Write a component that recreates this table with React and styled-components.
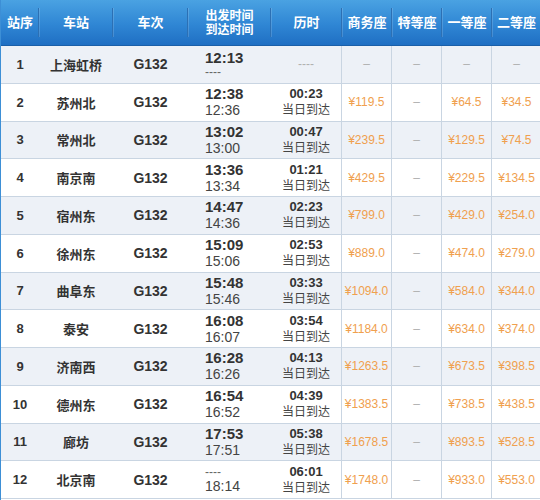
import React from 'react'
import styled, { createGlobalStyle } from 'styled-components'

const GlobalStyle = createGlobalStyle`
  html, body {
    margin: 0;
    padding: 0;
    background: #ffffff;
  }
  body {
    font-family: "Liberation Sans", "Noto Sans CJK SC", sans-serif;
    color: #333333;
  }
`

const COLS = '38px 74px 75px 83px 71px 50px 50px 50px 49px'

const Table = styled.div`
  width: 540px;
  height: 500px;
  overflow: hidden;
  border-left: 1px solid #3d8fd6;
  box-sizing: border-box;
`

const HeadRow = styled.div`
  display: grid;
  grid-template-columns: ${COLS};
  height: 46px;
  background: linear-gradient(#4aa2e2 0%, #2f86d4 55%, #1f6fc3 100%);
  border-bottom: 1px solid #1a5fa8;
  box-sizing: border-box;
`

const HeadCell = styled.div`
  display: flex;
  flex-direction: column;
  align-items: center;
  justify-content: center;
  text-align: center;
  color: #ffffff;
  font-family: "Liberation Sans", "Noto Sans CJK SC", sans-serif;
  font-weight: bold;
  font-size: 13px;
  line-height: 14px;
  position: relative;
  &:not(:last-child)::after {
    content: '';
    position: absolute;
    right: 0;
    top: 8px;
    bottom: 8px;
    width: 1px;
    background: #2c70b4;
    box-shadow: 1px 0 0 rgba(255, 255, 255, 0.15);
  }
`

const HeadLine = styled.span`
  font-size: 12px;
  line-height: 14px;
  height: 14px;
`

const Row = styled.div`
  display: grid;
  grid-template-columns: ${COLS};
  height: 37.75px;
  box-sizing: border-box;
  border-bottom: 1px solid #c9d5e2;
  background: ${(p) => (p.$alt ? '#edf1f7' : '#ffffff')};
`

const Cell = styled.div`
  display: flex;
  align-items: center;
  justify-content: center;
  text-align: center;
  box-sizing: border-box;
  border-right: ${(p) => (p.$line ? '1px solid #c9d5e2' : 'none')};
`

const Seq = styled(Cell)`
  font-size: 13px;
  font-weight: bold;
  color: #333;
`

const Station = styled(Cell)`
  font-family: "Noto Sans CJK SC", sans-serif;
  font-size: 13px;
  font-weight: bold;
  color: #333;
`

const Train = styled(Cell)`
  font-size: 14px;
  font-weight: bold;
  color: #333;
`

const TimeCell = styled.div`
  display: flex;
  flex-direction: column;
  justify-content: center;
  padding-left: 17px;
  line-height: 16px;
`

const Dep = styled.span`
  font-size: 15px;
  font-weight: bold;
  color: #333;
`

const Arr = styled.span`
  font-size: 14px;
  color: #444;
`

const Dash = styled.span`
  font-size: 12px;
  color: #666;
  line-height: 12px;
`

const Duration = styled(Cell)`
  flex-direction: column;
  line-height: 16px;
`

const DurTime = styled.span`
  font-size: 13px;
  font-weight: bold;
  color: #333;
`

const Same = styled.span`
  font-size: 12px;
  color: #444;
`

const Price = styled(Cell)`
  font-size: 12px;
  color: ${(p) => (p.$empty ? '#b0b0b0' : '#f0a04e')};
`

const stops = [
  ['1', '上海虹桥', '12:13', '----', '----', '', '–', '–', '–', '–'],
  ['2', '苏州北', '12:38', '12:36', '00:23', '当日到达', '¥119.5', '–', '¥64.5', '¥34.5'],
  ['3', '常州北', '13:02', '13:00', '00:47', '当日到达', '¥239.5', '–', '¥129.5', '¥74.5'],
  ['4', '南京南', '13:36', '13:34', '01:21', '当日到达', '¥429.5', '–', '¥229.5', '¥134.5'],
  ['5', '宿州东', '14:47', '14:36', '02:23', '当日到达', '¥799.0', '–', '¥429.0', '¥254.0'],
  ['6', '徐州东', '15:09', '15:06', '02:53', '当日到达', '¥889.0', '–', '¥474.0', '¥279.0'],
  ['7', '曲阜东', '15:48', '15:46', '03:33', '当日到达', '¥1094.0', '–', '¥584.0', '¥344.0'],
  ['8', '泰安', '16:08', '16:07', '03:54', '当日到达', '¥1184.0', '–', '¥634.0', '¥374.0'],
  ['9', '济南西', '16:28', '16:26', '04:13', '当日到达', '¥1263.5', '–', '¥673.5', '¥398.5'],
  ['10', '德州东', '16:54', '16:52', '04:39', '当日到达', '¥1383.5', '–', '¥738.5', '¥438.5'],
  ['11', '廊坊', '17:53', '17:51', '05:38', '当日到达', '¥1678.5', '–', '¥893.5', '¥528.5'],
  ['12', '北京南', '----', '18:14', '06:01', '当日到达', '¥1748.0', '–', '¥933.0', '¥553.0'],
]

const heads = ['站序', '车站', '车次', null, '历时', '商务座', '特等座', '一等座', '二等座']

export default function App() {
  return (
    <>
      <GlobalStyle />
      <Table>
        <HeadRow>
          {heads.map((h, i) =>
            h ? (
              <HeadCell key={i}>{h}</HeadCell>
            ) : (
              <HeadCell key={i}>
                <HeadLine>出发时间</HeadLine>
                <HeadLine>到达时间</HeadLine>
              </HeadCell>
            )
          )}
        </HeadRow>
        {stops.map((s, i) => (
          <Row key={s[0]} $alt={i % 2 === 0}>
            <Seq>{s[0]}</Seq>
            <Station>{s[1]}</Station>
            <Train>G132</Train>
            <TimeCell>
              {s[2] === '----' ? <Dash>----</Dash> : <Dep>{s[2]}</Dep>}
              {s[3] === '----' ? <Dash>----</Dash> : <Arr>{s[3]}</Arr>}
            </TimeCell>
            <Duration $line>
              {s[5] ? (
                <>
                  <DurTime>{s[4]}</DurTime>
                  <Same>{s[5]}</Same>
                </>
              ) : (
                <Price $empty>----</Price>
              )}
            </Duration>
            {s.slice(6).map((p, j) => (
              <Price key={j} $line={j < 3} $empty={p === '–'}>
                {p}
              </Price>
            ))}
          </Row>
        ))}
      </Table>
    </>
  )
}
